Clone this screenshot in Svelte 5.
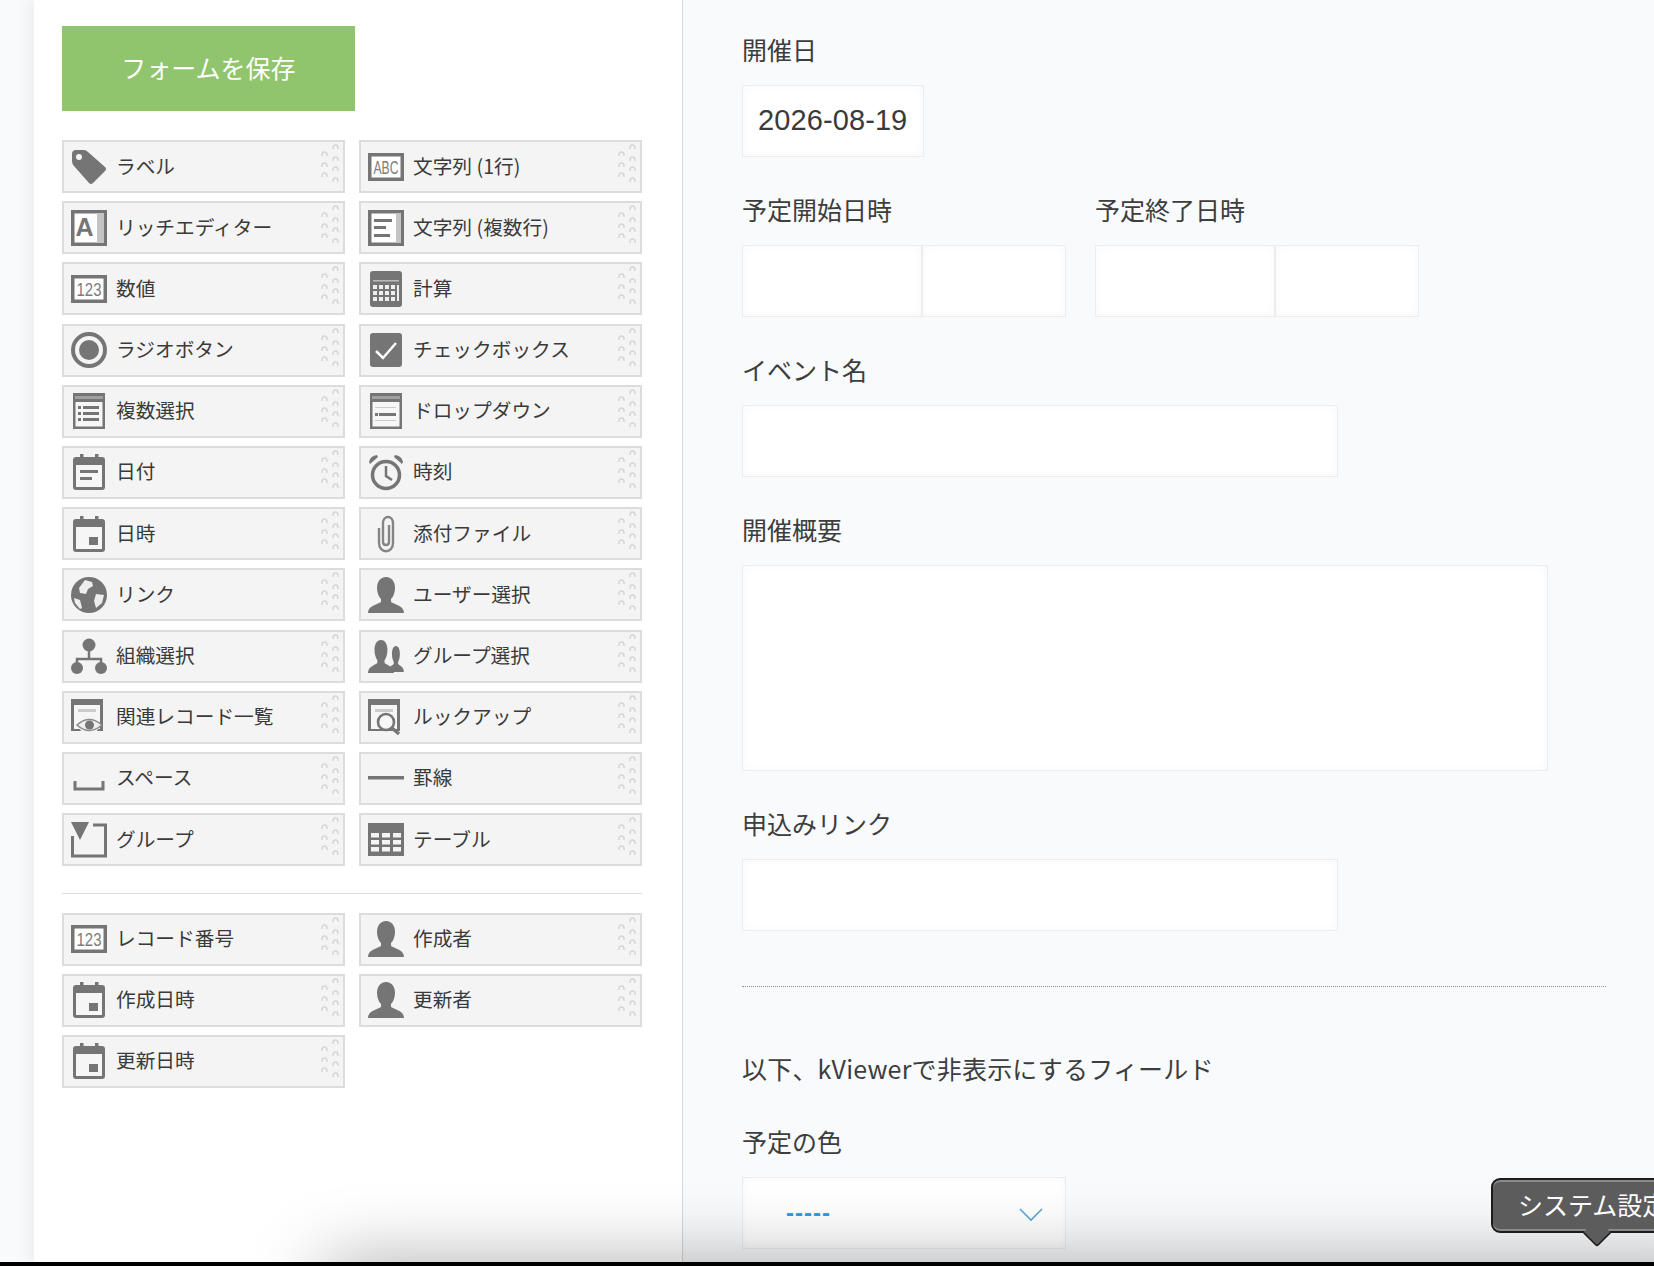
<script>
	const fields = [
		{ name: 'label', text: 'ラベル' },
		{ name: 'abc', text: '文字列 (1行)' },
		{ name: 'rich', text: 'リッチエディター' },
		{ name: 'multi', text: '文字列 (複数行)' },
		{ name: 'num', text: '数値' },
		{ name: 'calc', text: '計算' },
		{ name: 'radio', text: 'ラジオボタン' },
		{ name: 'check', text: 'チェックボックス' },
		{ name: 'list', text: '複数選択' },
		{ name: 'drop', text: 'ドロップダウン' },
		{ name: 'date', text: '日付' },
		{ name: 'clock', text: '時刻' },
		{ name: 'datetime', text: '日時' },
		{ name: 'clip', text: '添付ファイル' },
		{ name: 'globe', text: 'リンク' },
		{ name: 'user', text: 'ユーザー選択' },
		{ name: 'org', text: '組織選択' },
		{ name: 'users', text: 'グループ選択' },
		{ name: 'related', text: '関連レコード一覧' },
		{ name: 'lookup', text: 'ルックアップ' },
		{ name: 'space', text: 'スペース' },
		{ name: 'line', text: '罫線' },
		{ name: 'group', text: 'グループ' },
		{ name: 'table', text: 'テーブル' }
	];

	const system = [
		{ name: 'num', text: 'レコード番号' },
		{ name: 'user', text: '作成者' },
		{ name: 'datetime', text: '作成日時' },
		{ name: 'user', text: '更新者' },
		{ name: 'datetime', text: '更新日時' }
	];

	const userPath =
		'M18 0C12 0 9 5 9 11c0 5 2 9 4 11v3C8 28 0 29 0 36h36c0-7-8-8-13-11v-3c2-2 4-6 4-11C27 5 24 0 18 0z';
</script>

{#snippet item(f)}
	<div class="item">
		<svg class="icon" viewBox="0 0 36 36" fill="#757575">
			{#if f.name === 'label'}
				<path d="M5 1h8q2 0 4 2l17 15q2 2 0 4L22 34q-2 2-4 0L3 17q-2-2-2-5V5q0-4 4-4z" />
				<circle cx="8" cy="8" r="3" fill="#f4f4f4" />
			{:else if f.name === 'abc'}
				<rect x="1.75" y="5.75" width="32.5" height="24.5" fill="#fff" stroke="#757575" stroke-width="3.5" />
				<text x="18" y="24.5" class="mini" textLength="25" lengthAdjust="spacingAndGlyphs">ABC</text>
			{:else if f.name === 'num'}
				<rect x="1.75" y="5.75" width="32.5" height="24.5" fill="#fff" stroke="#757575" stroke-width="3.5" />
				<text x="18" y="24.5" class="mini" textLength="25" lengthAdjust="spacingAndGlyphs">123</text>
			{:else if f.name === 'rich'}
				<rect x="1.75" y="1.75" width="32.5" height="32.5" fill="#fff" stroke="#757575" stroke-width="3.5" />
				<rect x="26" y="3" width="7" height="30" fill="#c4c4c4" />
				<text x="13.5" y="26" class="big">A</text>
			{:else if f.name === 'multi'}
				<rect x="1.75" y="1.75" width="32.5" height="32.5" fill="#fff" stroke="#757575" stroke-width="3.5" />
				<rect x="28" y="3" width="5" height="30" fill="#c4c4c4" />
				<rect x="6" y="9" width="18" height="3" />
				<rect x="6" y="16" width="12" height="3" />
				<rect x="6" y="24" width="16" height="3" />
			{:else if f.name === 'calc'}
				<rect x="2" y="0" width="32" height="36" rx="3" />
				<rect x="5" y="9" width="26" height="1.5" fill="#bbb" />
				{#each [14, 20, 26] as y}
					{#each [5, 11, 17, 23] as x}
						<rect {x} {y} width="4" height="4" fill="#eee" />
					{/each}
				{/each}
				<rect x="29" y="14" width="2" height="16" fill="#eee" />
			{:else if f.name === 'radio'}
				<circle cx="18" cy="18" r="16" fill="#f4f4f4" stroke="#757575" stroke-width="4" />
				<circle cx="18" cy="18" r="10" />
			{:else if f.name === 'check'}
				<rect x="2" y="1" width="32" height="34" rx="3" />
				<path d="M8 19l7 7 13-15" fill="none" stroke="#fff" stroke-width="2.5" />
			{:else if f.name === 'list' || f.name === 'drop'}
				<rect x="2" y="0" width="32" height="36" />
				<rect x="4" y="3" width="28" height="3" fill="#a0a0a0" />
				<rect x="4.5" y="9" width="27" height="24.5" fill="#f6f6f6" />
				{#if f.name === 'list'}
					{#each [13, 19, 25] as y}
						<rect x="7" {y} width="3" height="3" />
						<rect x="12" {y} width="16" height="3" />
					{/each}
				{:else}
					<rect x="7" y="14" width="21" height="1" fill="#ccc" />
					<rect x="7" y="20" width="3" height="3" />
					<rect x="11" y="20" width="17" height="3" />
					<rect x="7" y="27" width="21" height="1" fill="#ccc" />
				{/if}
			{:else if f.name === 'date' || f.name === 'datetime'}
				<rect x="9" y="0" width="3.5" height="6" />
				<rect x="24" y="0" width="3.5" height="6" />
				<rect x="2" y="3" width="32" height="33" rx="3" />
				<rect x="5" y="11" width="26" height="22" fill="#f6f6f6" />
				{#if f.name === 'date'}
					<rect x="9" y="16" width="18" height="3" />
					<rect x="9" y="23" width="12" height="3" />
				{:else}
					<rect x="18" y="21" width="9" height="8" />
				{/if}
			{:else if f.name === 'clock'}
				<circle cx="18" cy="21" r="13.5" fill="none" stroke="#757575" stroke-width="3.5" />
				<path d="M18 12v10l6 4" fill="none" stroke="#757575" stroke-width="2.5" />
				<path d="M1 8q1-6 8-7l1 2-8 7zM35 8q-1-6-8-7l-1 2 8 7z" />
			{:else if f.name === 'clip'}
				<path
					d="M11 12v15c0 11 14 11 14 0V7C25-1 15-1 15 7v19c0 4 6 4 6 0V9"
					fill="none"
					stroke="#858585"
					stroke-width="2.4"
				/>
			{:else if f.name === 'globe'}
				<circle cx="18" cy="18" r="18" />
				<path d="M14 3l7 2 1 4-5 3-2 5-6-1-1-5zM25 17l8 1-2 8-6 5-2-7zM3 21l6 2 2 8-2 1-5-6z" fill="#ededed" />
			{:else if f.name === 'user'}
				<path d={userPath} />
			{:else if f.name === 'users'}
				<path d={userPath} transform="translate(0 2) scale(.72 .92)" />
				<path d={userPath} transform="translate(20 8) scale(.44 .72)" />
			{:else if f.name === 'org'}
				<circle cx="18" cy="7" r="6.5" />
				<circle cx="6" cy="30" r="6" />
				<circle cx="30" cy="30" r="6" />
				<path d="M18 12v9M6 26v-5h24v5" fill="none" stroke="#757575" stroke-width="2.5" />
			{:else if f.name === 'related' || f.name === 'lookup'}
				<rect x="0" y="0" width="32" height="32" />
				<rect x="3" y="6" width="26" height="24" fill="#f6f6f6" />
				<rect x="7" y="10" width="18" height="3" fill="#ccc" />
				{#if f.name === 'related'}
					<circle cx="18" cy="26" r="10" fill="#f4f4f4" />
					<path d="M6 26q12-11 25 0q-13 11-25 0z" fill="#eee" stroke="#8a8a8a" stroke-width="1.6" />
					<circle cx="18.5" cy="26" r="4.5" />
				{:else}
					<circle cx="18" cy="23" r="8" fill="#f6f6f6" stroke="#757575" stroke-width="2.6" />
					<path d="M24 29l7 6" stroke="#757575" stroke-width="3.4" />
				{/if}
			{:else if f.name === 'space'}
				<path d="M4 21v8h28v-8" fill="none" stroke="#757575" stroke-width="3" />
			{:else if f.name === 'line'}
				<rect x="0" y="16" width="36" height="3.5" />
			{:else if f.name === 'group'}
				<path d="M22 3h12.5v31h-33V14" fill="none" stroke="#757575" stroke-width="3" />
				<path d="M0 0h18l-9 18z" />
			{:else if f.name === 'table'}
				<rect x="0" y="1" width="36" height="33" />
				{#each [11, 18, 25] as y}
					{#each [3, 14, 25] as x}
						<rect {x} {y} width="8" height="4.5" fill="#f4f4f4" />
					{/each}
				{/each}
			{/if}
		</svg>
		<span class="item-text">{f.text}</span>
		<svg class="grip" viewBox="0 0 20 44" fill="none" stroke="#d6d6d6" stroke-width="1.5">
			{#each [9, 20, 30] as y}
				<path d="M2 {y + 4}v-1q0-3 2.5-3t2.5 3v1" />
			{/each}
			{#each [2, 14, 24, 35] as y}
				<path d="M13 {y + 4}v-1q0-3 2.5-3t2.5 3v1" />
			{/each}
		</svg>
	</div>
{/snippet}

<div class="page">
	<div class="main">
		<div class="gutter"></div>

		<aside class="palette">
			<button class="save">フォームを保存</button>
			<div class="items">
				{#each fields as f}
					{@render item(f)}
				{/each}
			</div>
			<hr class="sep" />
			<div class="items">
				{#each system as f}
					{@render item(f)}
				{/each}
			</div>
		</aside>

		<section class="form">
			<div class="field">
				<div class="lbl">開催日</div>
				<input class="input date" value="2026-08-19" readonly />
			</div>

			<div class="field two">
				<div>
					<div class="lbl">予定開始日時</div>
					<div class="pair">
						<input class="input d" readonly />
						<input class="input t" readonly />
					</div>
				</div>
				<div>
					<div class="lbl">予定終了日時</div>
					<div class="pair">
						<input class="input d" readonly />
						<input class="input t" readonly />
					</div>
				</div>
			</div>

			<div class="field">
				<div class="lbl">イベント名</div>
				<input class="input wide" readonly />
			</div>

			<div class="field">
				<div class="lbl">開催概要</div>
				<div class="input area"></div>
			</div>

			<div class="field">
				<div class="lbl">申込みリンク</div>
				<input class="input wide" readonly />
			</div>

			<hr class="dotted" />

			<div class="note">以下、kViewerで非表示にするフィールド</div>

			<div class="lbl">予定の色</div>
			<div class="input select">
				<span class="dashes">-----</span>
				<svg class="chev" viewBox="0 0 24 14" fill="none" stroke="#5ba8dc" stroke-width="1.6">
					<path d="M1 1l11 11L23 1" />
				</svg>
			</div>
		</section>
	</div>

	<div class="bar"></div>

	<div class="dock-shadow"></div>
	<div class="tip">
		システム設定
		<span class="tip-arrow"></span>
	</div>
</div>

<style>
	:global(body) {
		margin: 0;
		background: #f8fafb;
	}

	.page {
		position: relative;
		width: 1654px;
		height: 1266px;
		overflow: hidden;
		display: flex;
		flex-direction: column;
		font-family: 'Noto Sans CJK JP', sans-serif;
		color: #333;
	}

	.main {
		flex: 1;
		min-height: 0;
		display: flex;
		background: #f8fafb;
	}

	.bar {
		height: 4px;
		background: #000;
		position: relative;
		z-index: 3;
	}

	.gutter {
		width: 34px;
		flex: none;
	}

	.palette {
		width: 649px;
		flex: none;
		box-sizing: border-box;
		padding: 26px 40px 0 28px;
		background: #fff;
		border-right: 1px solid #d8d8d8;
		box-shadow: -6px 0 12px rgba(0, 0, 0, 0.05);
	}

	.save {
		display: block;
		width: 293px;
		height: 85px;
		margin: 0 0 29px;
		padding: 0 0 3px;
		border: 0;
		background: #90c46d;
		color: #fff;
		font: 25px/1 'Noto Sans CJK JP', sans-serif;
	}

	.items {
		display: grid;
		grid-template-columns: 283px 283px;
		column-gap: 14px;
		row-gap: 8.2px;
	}

	.item {
		position: relative;
		box-sizing: border-box;
		height: 53px;
		display: flex;
		align-items: center;
		gap: 9px;
		padding-left: 7px;
		background: #f4f4f4;
		border: 2px solid #dcdcdc;
		font-size: 19.7px;
		color: #3a3a3a;
		white-space: nowrap;
	}

	.item-text {
		padding-bottom: 3px;
	}

	.icon {
		width: 36px;
		height: 36px;
		flex: none;
		overflow: visible;
	}

	.mini {
		font: 18px 'Liberation Sans', sans-serif;
		fill: #7c7c7c;
		text-anchor: middle;
	}

	.big {
		font: bold 25px 'Liberation Sans', sans-serif;
		fill: #757575;
		text-anchor: middle;
	}

	.grip {
		position: absolute;
		right: 3px;
		top: 1px;
		width: 20px;
		height: 44px;
	}

	.sep {
		margin: 27px 0 18.5px;
		border: 0;
		border-top: 1px solid #dedede;
	}

	.form {
		flex: 1;
		min-width: 0;
		padding: 34px 48px 0 59px;
	}

	.field {
		margin-bottom: 37px;
	}

	.two {
		display: flex;
		gap: 29px;
	}

	.lbl {
		height: 51px;
		font-size: 25px;
		line-height: 30px;
		color: #3d3d3d;
	}

	.input {
		display: block;
		box-sizing: border-box;
		height: 72px;
		margin: 0;
		padding: 0 15px;
		background: #fff;
		border: 1px solid #ebedee;
		border-radius: 0;
		outline: 0;
		box-shadow: inset 0 0 8px rgba(0, 0, 0, 0.035);
	}

	.date {
		width: 182px;
		padding-bottom: 2px;
		font: 29px 'Liberation Sans', sans-serif;
		letter-spacing: 0.1px;
		color: #3a3a3a;
	}

	.pair {
		display: flex;
	}

	.d {
		width: 180px;
	}

	.t {
		width: 144px;
	}

	.wide {
		width: 596px;
	}

	.area {
		width: 806px;
		height: 206px;
	}

	.dotted {
		margin: 55px 0 66px;
		border: 0;
		border-top: 1px dotted #8f8f8f;
	}

	.note {
		height: 73px;
		font-size: 25px;
		line-height: 30px;
		letter-spacing: 0.2px;
		color: #3d3d3d;
	}

	.select {
		position: relative;
		width: 324px;
		padding-left: 43px;
		line-height: 68px;
	}

	.dashes {
		color: #3498db;
		font: bold 24px/70px 'Liberation Sans', sans-serif;
		letter-spacing: 1px;
	}

	.chev {
		position: absolute;
		right: 22px;
		top: 30px;
		width: 24px;
		height: 14px;
	}

	.dock-shadow {
		position: absolute;
		left: 340px;
		right: -60px;
		bottom: -44px;
		height: 30px;
		background: #000;
		box-shadow: 0 0 75px 14px rgba(0, 0, 0, 0.38);
		z-index: 1;
	}

	.tip {
		position: absolute;
		left: 1491px;
		top: 1178px;
		z-index: 2;
		width: 220px;
		height: 55px;
		box-sizing: border-box;
		padding-left: 25px;
		background: #5c5c5c;
		border: 2px solid #1c1c1c;
		border-radius: 9px;
		box-shadow: inset 0 2px 0 #8a8a8a, inset 0 -2px 0 #8a8a8a;
		color: #fff;
		font-size: 25px;
		line-height: 48px;
		white-space: nowrap;
	}

	.tip-arrow {
		position: absolute;
		left: 92px;
		top: 41px;
		width: 24px;
		height: 24px;
		box-sizing: border-box;
		background: #5c5c5c;
		border-right: 2px solid #1c1c1c;
		border-bottom: 2px solid #1c1c1c;
		border-bottom-right-radius: 4px;
		transform: rotate(45deg) scale(0.85);
	}
</style>
